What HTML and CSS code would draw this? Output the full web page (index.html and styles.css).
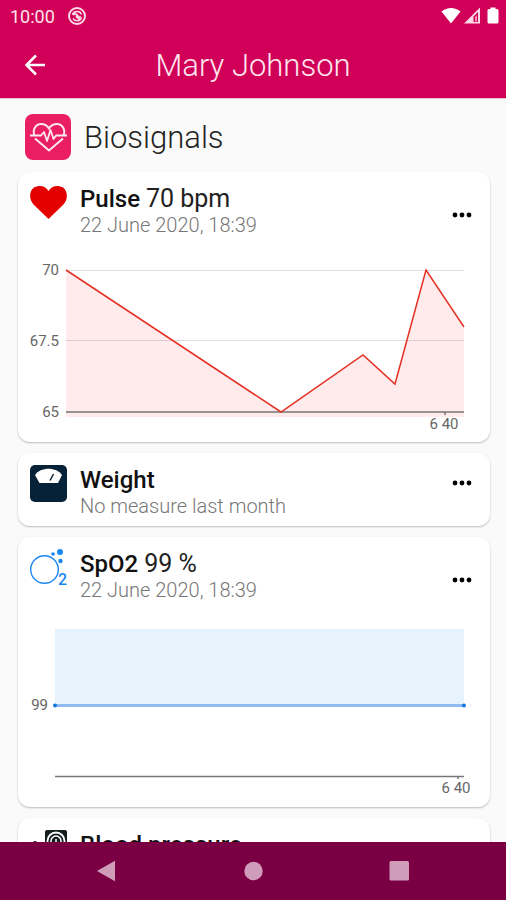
FILE: index.html
```html
<!DOCTYPE html>
<html lang="en">

<head>
  <meta charset="UTF-8">
  <meta name="viewport" content="width=device-width, initial-scale=1.0">
  <title>Mary Johnson</title>
  <link rel="stylesheet" href="styles.css">
</head>

<body>
  <div class="status-bar">
    <span class="time">10:00</span>
    <svg width="20" height="20" viewBox="0 0 20 20" fill="none" stroke="#ffd9e6">
      <circle cx="10" cy="10" r="8" stroke-width="2" />
      <path d="M5.500 8.500C7 4.500 13 4.500 14.500 8.500M14.500 12C13 15.500 8 15.500 6 12.500" stroke-width="1.500" />
      <path d="M5.500 8.500c2.500-1 4-.5 5 1s2.500 2 4 2M9 10l4 4" stroke-width="2" />
    </svg>
    <div class="status-icons">
      <svg width="20" height="18" viewBox="0 0 20 18" fill="#fff">
        <path d="M.5 4.500C6-.2 14-.2 19.500 4.500L10 16.500z" />
      </svg>
      <svg width="18" height="18" viewBox="0 0 18 18">
        <path d="M1 16.500L17 .5v16z" fill="#ffd9e6" />
        <path d="M10.500 15V9.500L15 5v10z" fill="#d00058" />
        <path d="M12 14.500V10l2-2v6.500z" fill="#f08cb0" />
      </svg>
      <svg width="12" height="18" viewBox="0 0 12 18" fill="#fff">
        <path d="M3.500 2V.5h5V2H10q1.500 0 1.500 1.500V15q0 1.500-1.500 1.500H2Q.5 16.500.5 15V3.500Q.5 2 2 2z" />
      </svg>
    </div>
  </div>

  <header class="app-bar">
    <button class="icon-button" aria-label="Back">
      <svg width="22" height="22" viewBox="0 0 22 22" fill="none" stroke="#fff" stroke-width="2.500">
        <path d="M21 11H3M12 1.500L2.500 11l9.500 9.500" />
      </svg>
    </button>
    <h1>Mary Johnson</h1>
  </header>

  <main class="content">
    <div class="section-title">
      <svg width="46" height="46" viewBox="0 0 46 46" fill="none" stroke="#ffe9f0" stroke-width="2">
        <rect width="46" height="46" rx="8" fill="#ea1e63" stroke="none" />
        <path d="M9.500 21.500C7 15.500 11 10 16 10c4 0 6.500 2 8 4.500C25.500 12 28 10 32 10c5 0 9 5.500 6.500 11.500" />
        <path d="M10 24.500L24 36.500l14-12" />
        <path d="M5 21.500h11l3-3.500 3 9 3.500-11 3 9 2.500-3.500h11" stroke-width="1.800" stroke-linejoin="round" />
      </svg>
      <h2>Biosignals</h2>
    </div>

    <section class="card card-chart">
      <div class="card-header">
        <svg class="card-icon" width="38" height="38" viewBox="0 0 38 38">
          <path d="M18.500 35L4 21C-2 15-.5 5.500 5 3 10.500.5 16 2.500 18.500 7 21 2.500 26.500.5 32 3c5.500 2.500 7 12 1 18z" fill="#e50000" />
        </svg>
        <div class="card-text">
          <h3>Pulse <span>70 bpm</span></h3>
          <p>22 June 2020, 18:39</p>
        </div>
        <button class="menu-button" aria-label="Pulse options">
          <svg width="20" height="6" viewBox="0 0 20 6"><circle cx="3" cy="3" r="2.400" /><circle cx="10" cy="3" r="2.400" /><circle cx="17" cy="3" r="2.400" /></svg>
        </button>
      </div>
      <svg class="chart" viewBox="0 0 472 197">
        <path class="grid" d="M48 25.500H446M48 95.500H446" />
        <polygon points="48,25 263,167 345,110 377,139 408,25 446,82 446,172 48,172" fill="#f00" fill-opacity="0.080" />
        <path class="axis" d="M48 167H446M427 167v3" />
        <polyline class="pulse-line" points="48,25 263,167 345,110 377,139 408,25 446,82" />
        <text x="41" y="30" text-anchor="end">70</text>
        <text x="41" y="101" text-anchor="end">67.5</text>
        <text x="41" y="172" text-anchor="end">65</text>
        <text x="426" y="184" text-anchor="middle">6 40</text>
      </svg>
    </section>

    <section class="card">
      <div class="card-header">
        <svg class="card-icon" width="38" height="38" viewBox="0 0 38 38">
          <rect x="0" y="0" width="37" height="37" rx="5" fill="#062238" />
          <path d="M5 10C10.500 1.500 26.500 1.500 32 10L28 18H9.500z" fill="#fff" />
          <path d="M20 15.500l3.500-6.500" stroke="#062238" stroke-width="1.500" />
        </svg>
        <div class="card-text">
          <h3>Weight</h3>
          <p>No measure last month</p>
        </div>
        <button class="menu-button" aria-label="Weight options">
          <svg width="20" height="6" viewBox="0 0 20 6"><circle cx="3" cy="3" r="2.400" /><circle cx="10" cy="3" r="2.400" /><circle cx="17" cy="3" r="2.400" /></svg>
        </button>
      </div>
    </section>

    <section class="card card-chart">
      <div class="card-header">
        <svg class="card-icon" width="38" height="38" viewBox="0 0 38 38" fill="#1a86f0">
          <circle cx="14.500" cy="20.500" r="13.800" fill="none" stroke="#1a86f0" stroke-width="1.400" />
          <circle cx="23" cy="5" r="1.800" />
          <circle cx="30" cy="3" r="3" />
          <circle cx="30.500" cy="12" r="2.200" />
          <text class="subscript" x="28" y="36">2</text>
        </svg>
        <div class="card-text">
          <h3>SpO2 <span>99 %</span></h3>
          <p>22 June 2020, 18:39</p>
        </div>
        <button class="menu-button" aria-label="SpO2 options">
          <svg width="20" height="6" viewBox="0 0 20 6"><circle cx="3" cy="3" r="2.400" /><circle cx="10" cy="3" r="2.400" /><circle cx="17" cy="3" r="2.400" /></svg>
        </button>
      </div>
      <svg class="chart" viewBox="0 0 472 197">
        <rect x="37" y="19" width="409" height="76" fill="#e6f3fd" />
        <path class="axis" d="M37 166.500H446M440 166v3" />
        <path class="spo-line" d="M37 95.500H446" />
        <circle cx="37" cy="95.500" r="2" fill="#0d7be0" />
        <circle cx="446" cy="95.500" r="2" fill="#0d7be0" />
        <text x="30" y="100" text-anchor="end">99</text>
        <text x="438" y="183" text-anchor="middle">6 40</text>
      </svg>
    </section>

    <section class="card">
      <div class="card-header">
        <svg class="card-icon" width="38" height="38" viewBox="0 0 38 38">
          <rect x="15" y="0" width="22" height="22" rx="2" fill="#14201f" />
          <circle cx="26" cy="11" r="8.500" fill="none" stroke="#fff" stroke-width="1.800" />
          <circle cx="26" cy="11" r="5" fill="none" stroke="#fff" stroke-width="1.500" />
          <path d="M26 13V9" stroke="#fff" stroke-width="1.500" />
          <path d="M3 20V13q0-2 2-2t2 2v7" fill="#14201f" />
        </svg>
        <div class="card-text">
          <h3>Blood pressure</h3>
        </div>
      </div>
    </section>
  </main>

  <nav class="nav-bar">
    <button class="icon-button" aria-label="Back">
      <svg width="20" height="22" viewBox="0 0 20 22" fill="#cf9dba"><path d="M0 11L18 .8v20.400z" /></svg>
    </button>
    <button class="icon-button" aria-label="Home">
      <svg width="20" height="22" viewBox="0 0 20 22" fill="#cf9dba"><circle cx="10.500" cy="11" r="9.200" /></svg>
    </button>
    <button class="icon-button" aria-label="Overview">
      <svg width="20" height="22" viewBox="0 0 20 22" fill="#cf9dba"><rect x=".5" y="1" width="19.500" height="19.500" rx="1.500" /></svg>
    </button>
  </nav>
</body>

</html>
```
FILE: styles.css
```css
* {
  box-sizing: border-box;
}

body {
  margin: 0;
  height: 100vh;
  display: flex;
  flex-direction: column;
  font-family: Roboto, "Liberation Sans", sans-serif;
  background: #fafafa;
  color: #111;
}

h1, h2, h3, p {
  margin: 0;
}

svg {
  display: block;
}

button {
  padding: 0;
  border: 0;
  background: none;
}

.status-bar {
  display: flex;
  align-items: center;
  height: 32px;
  padding: 0 7px 0 10px;
  gap: 12px;
  background: #d00058;
  color: #ffe0ea;
}

.time {
  font-size: 18px;
  font-weight: 400;
}

.status-icons {
  display: flex;
  margin-left: auto;
  gap: 2px;
}

.status-icons svg:last-child {
  margin-left: 4px;
}

.app-bar {
  display: grid;
  grid-template-columns: 44px 1fr 44px;
  align-items: center;
  height: 67px;
  padding: 0 13px;
  background: #d00058;
  border-bottom: 1px solid #f3bfd2;
}

.app-bar h1 {
  text-align: center;
  font-size: 31px;
  font-weight: 300;
  color: #ffe6ef;
}

.icon-button {
  display: flex;
  align-items: center;
  justify-content: center;
  width: 44px;
  height: 44px;
}

.content {
  flex: 1;
  min-height: 0;
  overflow: hidden;
  padding: 15px 16px 0 18px;
}

.section-title {
  display: flex;
  align-items: center;
  gap: 13px;
  padding-left: 7px;
  margin-bottom: 12px;
}

.section-title h2 {
  font-size: 31px;
  font-weight: 300;
  color: #222;
}

.card {
  margin-bottom: 11px;
  background: #fff;
  border-radius: 12px;
  box-shadow: 0 1px 2px rgba(0, 0, 0, 0.25);
}

.card-header {
  display: flex;
  align-items: flex-start;
  padding: 12px 18px 9px 12px;
}

.card-text {
  flex: 1;
  padding-left: 12px;
}

.card-text h3 {
  font-size: 24px;
  line-height: 30px;
  font-weight: 500;
}

.card-text h3 span {
  font-size: 25px;
  font-weight: 400;
  color: #222;
}

.card-text p {
  font-size: 20px;
  line-height: 22px;
  font-weight: 300;
  color: #777;
}

.menu-button {
  padding: 8px 0;
  margin-top: 7px;
}

.card-chart .menu-button {
  margin-top: 20px;
}

.chart {
  width: 100%;
  height: auto;
}

.chart text {
  font-size: 15px;
  fill: #666;
}

.subscript {
  font-size: 16px;
  font-weight: 500;
}

.grid {
  stroke: #dedede;
}

.axis {
  fill: none;
  stroke: #777;
  stroke-width: 1.5;
}

.pulse-line {
  fill: none;
  stroke: #e53025;
  stroke-width: 1.5;
}

.spo-line {
  stroke: #8fbcf0;
  stroke-width: 3;
}

.nav-bar {
  display: flex;
  align-items: center;
  justify-content: center;
  gap: 102px;
  height: 58px;
  background: #7b0043;
}
```
